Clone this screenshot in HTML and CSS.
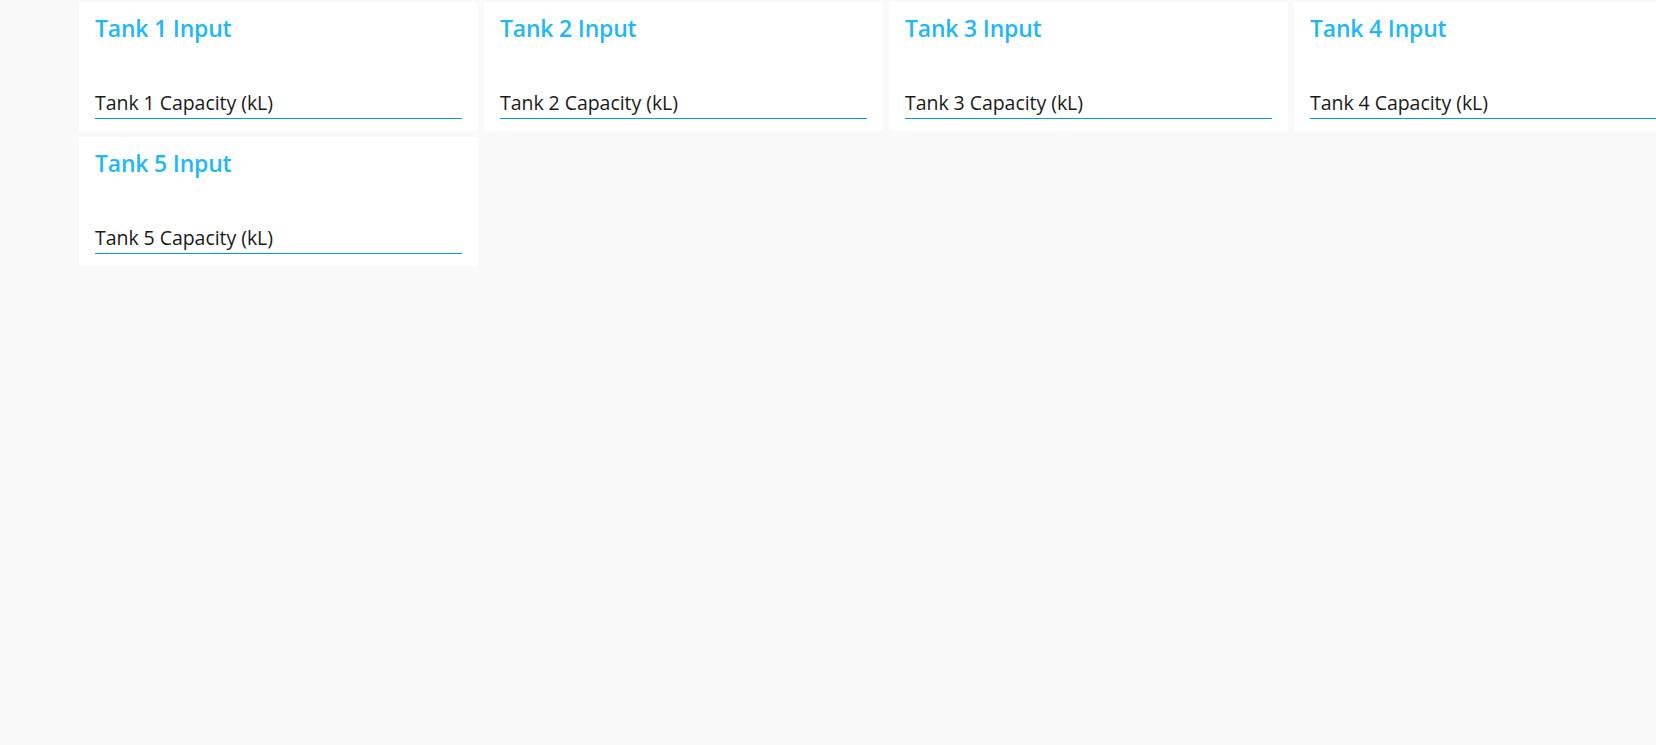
FILE: index.html
```html
<!DOCTYPE html>
<html lang="en">
<head>
<meta charset="utf-8">
<title>Tank Inputs</title>
<link rel="stylesheet" href="styles.css">
</head>
<body>
<main class="grid">
  <section class="card">
    <h2 class="card-title">Tank 1 Input</h2>
    <label class="field"><span class="field-label">Tank 1 Capacity (kL)</span></label>
  </section>
  <section class="card">
    <h2 class="card-title">Tank 2 Input</h2>
    <label class="field"><span class="field-label">Tank 2 Capacity (kL)</span></label>
  </section>
  <section class="card">
    <h2 class="card-title">Tank 3 Input</h2>
    <label class="field"><span class="field-label">Tank 3 Capacity (kL)</span></label>
  </section>
  <section class="card">
    <h2 class="card-title">Tank 4 Input</h2>
    <label class="field"><span class="field-label">Tank 4 Capacity (kL)</span></label>
  </section>
  <section class="card">
    <h2 class="card-title">Tank 5 Input</h2>
    <label class="field"><span class="field-label">Tank 5 Capacity (kL)</span></label>
  </section>
</main>
</body>
</html>
```

FILE: styles.css
```css
html, body {
  margin: 0;
  padding: 0;
  height: 100%;
  overflow: hidden;
  background: #f9f9f9;
  font-family: "Open Sans", "Noto Sans", sans-serif;
}

.grid {
  display: grid;
  grid-template-columns: repeat(4, 399px);
  gap: 6px;
  padding: 2px 0 0 79px;
  width: max-content;
}

.card {
  background: #ffffff;
  padding: 10px 16px 12px;
  display: flex;
  flex-direction: column;
}

.card-title {
  margin: 0;
  font-size: 23px;
  line-height: 32px;
  font-weight: 600;
  letter-spacing: -0.2px;
  color: #1fb7f7;
}

.field {
  display: block;
  margin-top: 47px;
  border-bottom: 1px solid #0a9ad8;
}

.field-label {
  display: block;
  font-size: 19.5px;
  line-height: 24px;
  padding-bottom: 3px;
  letter-spacing: -0.05px;
  color: #1a1a1a;
}
```
